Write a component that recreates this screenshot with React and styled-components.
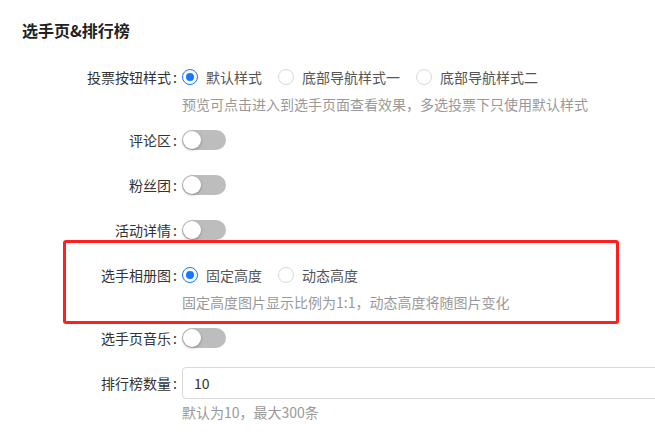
import React from "react";
import styled, { createGlobalStyle } from "styled-components";

const Global = createGlobalStyle`
  html, body { margin: 0; padding: 0; background: #fff; overflow: hidden; }
  body { font-family: "Noto Sans CJK SC", "Noto Sans", sans-serif; }
`;

const Page = styled.div`
  padding: 18px 0 0 22px;
  width: 900px;
`;

const Title = styled.div`
  font-size: 16px;
  line-height: 24px;
  font-weight: 700;
  color: #222;
  margin-bottom: 19px;
`;

const Item = styled.div`
  position: relative;
  display: grid;
  grid-template-columns: 160px 1fr;
  margin-bottom: ${(p) => (p.$hint ? 11 : 13)}px;
`;

const Label = styled.div`
  text-align: right;
  font-size: 14px;
  line-height: 32px;
  height: 32px;
  color: #333;
  white-space: nowrap;
  &::after {
    content: ":";
    margin: 0 5px 0 2px;
  }
`;

const Control = styled.div`
  display: flex;
  flex-direction: column;
`;

const ControlRow = styled.div`
  display: flex;
  align-items: center;
  min-height: 32px;
`;

const Hint = styled.div`
  margin-top: ${(p) => p.$top ?? 2}px;
  font-size: 14px;
  line-height: 18px;
  color: #999;
  white-space: nowrap;
`;

const RadioItem = styled.label`
  display: inline-flex;
  align-items: center;
  margin-right: 8px;
  font-size: 14px;
  color: #555;
  white-space: nowrap;
`;

const RadioCircle = styled.span`
  width: 16px;
  height: 16px;
  box-sizing: border-box;
  border-radius: 50%;
  border: 1px solid ${(p) => (p.$checked ? "#1677ff" : "#d9d9d9")};
  background: #fff;
  display: inline-flex;
  align-items: center;
  justify-content: center;
  &::after {
    content: "";
    width: 8px;
    height: 8px;
    border-radius: 50%;
    background: #1677ff;
    display: ${(p) => (p.$checked ? "block" : "none")};
  }
`;

const RadioText = styled.span`
  padding: 0 8px;
  line-height: 22px;
`;

const SwitchTrack = styled.span`
  position: relative;
  display: inline-block;
  width: 44px;
  height: 20px;
  border-radius: 10px;
  background: #bdbdbd;
`;

const SwitchKnob = styled.span`
  position: absolute;
  top: 1px;
  left: 1px;
  width: 18px;
  height: 18px;
  border-radius: 50%;
  background: #fff;
  box-shadow: 0 1px 3px rgba(0, 0, 0, 0.3);
`;

const Input = styled.div`
  box-sizing: border-box;
  width: 520px;
  height: 32px;
  border: 1px solid #d9d9d9;
  border-radius: 4px;
  padding: 0 11px;
  font-size: 14px;
  line-height: 30px;
  color: #333;
`;

const Highlight = styled.div`
  position: absolute;
  left: 41px;
  top: -19px;
  width: 556px;
  height: 84px;
  box-sizing: border-box;
  border: 3px solid #ff1f1f;
  border-radius: 3px;
  pointer-events: none;
`;

const Radio = ({ checked, children }) => (
  <RadioItem>
    <RadioCircle $checked={checked} />
    <RadioText>{children}</RadioText>
  </RadioItem>
);

const Switch = () => (
  <SwitchTrack>
    <SwitchKnob />
  </SwitchTrack>
);

export default function App() {
  return (
    <>
      <Global />
      <Page>
        <Title>选手页&amp;排行榜</Title>

        <Item $hint>
          <Label>投票按钮样式</Label>
          <Control>
            <ControlRow>
              <Radio checked>默认样式</Radio>
              <Radio>底部导航样式一</Radio>
              <Radio>底部导航样式二</Radio>
            </ControlRow>
            <Hint>预览可点击进入到选手页面查看效果，多选投票下只使用默认样式</Hint>
          </Control>
        </Item>

        <Item>
          <Label>评论区</Label>
          <ControlRow>
            <Switch />
          </ControlRow>
        </Item>

        <Item>
          <Label>粉丝团</Label>
          <ControlRow>
            <Switch />
          </ControlRow>
        </Item>

        <Item>
          <Label>活动详情</Label>
          <ControlRow>
            <Switch />
          </ControlRow>
        </Item>

        <Item $hint>
          <Highlight />
          <Label>选手相册图</Label>
          <Control>
            <ControlRow>
              <Radio checked>固定高度</Radio>
              <Radio>动态高度</Radio>
            </ControlRow>
            <Hint>固定高度图片显示比例为1:1，动态高度将随图片变化</Hint>
          </Control>
        </Item>

        <Item>
          <Label>选手页音乐</Label>
          <ControlRow>
            <Switch />
          </ControlRow>
        </Item>

        <Item $hint>
          <Label>排行榜数量</Label>
          <Control>
            <Input>10</Input>
            <Hint $top={4}>默认为10，最大300条</Hint>
          </Control>
        </Item>
      </Page>
    </>
  );
}
